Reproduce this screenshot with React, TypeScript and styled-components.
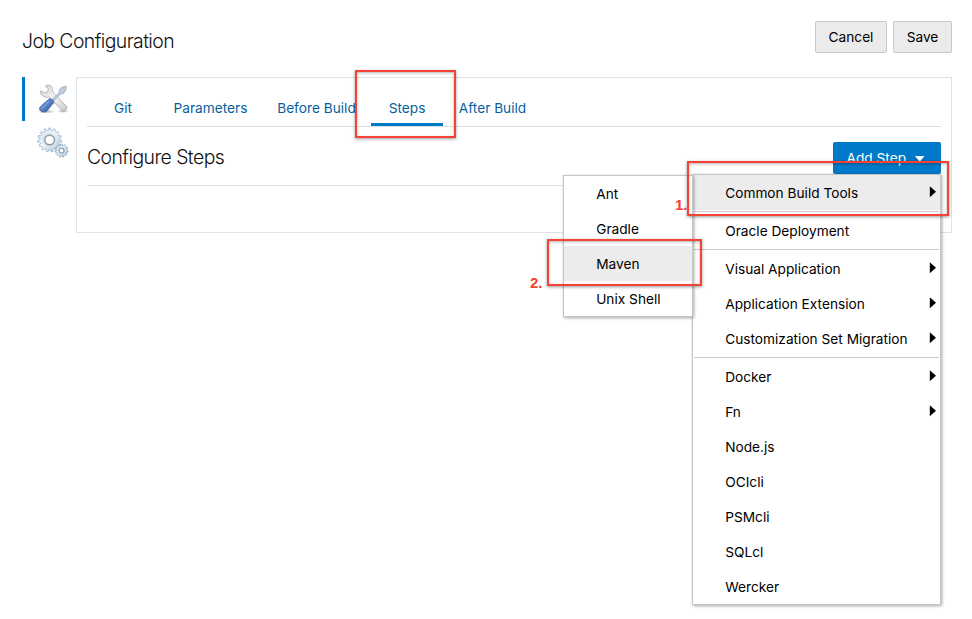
import React from "react";
import styled, { createGlobalStyle, css } from "styled-components";

const GlobalStyle = createGlobalStyle`
  * { box-sizing: border-box; }
  body {
    margin: 0;
    background: #fff;
    color: #000;
    font-family: Inter, "Liberation Sans", sans-serif;
    font-size: 13.7px;
  }
`;

const Page = styled.main`
  position: relative;
  width: 972px;
  height: 619px;
  padding: 21px 20px 0 22px;
  overflow: hidden;
`;

const Header = styled.header`
  display: flex;
  justify-content: space-between;
  height: 56px;
`;

const Title = styled.h1`
  margin: 0;
  padding-top: 8px;
  font-size: 19.4px;
  font-weight: 300;
  line-height: 24px;
  letter-spacing: -0.57px;
  color: #111;
`;

const Actions = styled.div`
  display: flex;
  gap: 6px;
`;

const Button = styled.button<{ $width: number }>`
  width: ${(p) => p.$width}px;
  height: 32px;
  padding: 0 0 1px;
  border: 1px solid #c8c8c8;
  border-radius: 2px;
  background: #ebebeb;
  color: #000;
  font: inherit;
`;

const Body = styled.div`
  display: flex;
`;

const Sidebar = styled.nav`
  width: 54px;
`;

const SideItem = styled.div<{ $active?: boolean }>`
  display: flex;
  height: 44px;
  padding-left: 12px;
  align-items: center;
  border-left: 3px solid ${(p) => (p.$active ? "#0079c8" : "transparent")};
  svg { display: block; }
`;

const Panel = styled.section`
  width: 876px;
  height: 156px;
  padding: 0 10px;
  border: 1px solid #dfe3e6;
`;

const Tabs = styled.div`
  display: flex;
  height: 49px;
  border-bottom: 1px solid #d6dfe6;
`;

const Tab = styled.div<{ $width: number; $active?: boolean }>`
  display: flex;
  width: ${(p) => p.$width}px;
  padding-top: 14px;
  align-items: center;
  justify-content: center;
  border-bottom: 3px solid ${(p) => (p.$active ? "#0079c8" : "transparent")};
  color: #055f9e;
  white-space: nowrap;
`;

const SectionHead = styled.div`
  display: flex;
  height: 59px;
  justify-content: space-between;
  padding-top: 15px;
  border-bottom: 1px solid #e0e2e4;
`;

const SectionTitle = styled.h2`
  margin: 0;
  padding-top: 3px;
  font-size: 19.4px;
  font-weight: 300;
  line-height: 24px;
  letter-spacing: -0.55px;
  color: #111;
`;

const AddStep = styled.button`
  display: flex;
  flex: none;
  width: 108px;
  height: 32px;
  padding: 0 0 0 13.5px;
  align-items: center;
  gap: 8.5px;
  border: 0;
  border-radius: 2px;
  background: #0079c8;
  color: #fff;
  font: inherit;
  line-height: 16px;
  svg { margin-top: 2px; }
`;

const Menu = styled.ul<{ $level: "root" | "sub" }>`
  position: absolute;
  margin: 0;
  padding: 0;
  list-style: none;
  border: 1px solid #c6c6c6;
  background: #fff;
  box-shadow: 1px 1px 3px rgba(0, 0, 0, 0.35);
  ${(p) =>
    p.$level === "root"
      ? css`left: 692px; top: 174px; width: 249px;`
      : css`left: 563px; top: 175px; width: 130px;`}
`;

const MenuItem = styled.li<{ $active?: boolean }>`
  display: flex;
  height: 35px;
  padding: 1px 4px 0 32.2px;
  align-items: center;
  justify-content: space-between;
  background: ${(p) => (p.$active ? "#ececec" : "transparent")};
  line-height: 16px;
  white-space: nowrap;
  svg { margin-bottom: 2px; }
`;

const Separator = styled.li`
  height: 1px;
  margin: 1px;
  background: #c8c8c8;
`;

const Callout = styled.div<{ $x: number; $y: number; $w: number; $h: number }>`
  position: absolute;
  left: ${(p) => p.$x}px;
  top: ${(p) => p.$y}px;
  width: ${(p) => p.$w}px;
  height: ${(p) => p.$h}px;
  border: 2px solid #f64336;
  box-shadow: 0 1px 3px rgba(0, 0, 0, 0.4), inset 0 1px 3px rgba(0, 0, 0, 0.3);
`;

const CalloutLabel = styled.span<{ $x: number; $y: number }>`
  position: absolute;
  left: ${(p) => p.$x}px;
  top: ${(p) => p.$y}px;
  color: #f64336;
  font: bold 15px/16px "Liberation Sans", sans-serif;
  text-shadow: 1px 1px 0 #fff, 0 1px 0 #fff, 1px 0 0 #fff;
`;

const ToolsIcon = () => (
  <svg width="32" height="32" viewBox="0 0 32 32">
    <defs>
      <linearGradient id="steel" x1="0" y1="0" x2="1" y2="1">
        <stop offset="0" stopColor="#d2d2d2" />
        <stop offset=".5" stopColor="#f4f4f4" />
        <stop offset="1" stopColor="#c9c9c9" />
      </linearGradient>
      <linearGradient id="handle" x1="0" y1="0" x2="1" y2="1">
        <stop offset="0" stopColor="#8db4ea" />
        <stop offset="1" stopColor="#254c9b" />
      </linearGradient>
      <radialGradient id="ground">
        <stop offset="0" stopColor="#777" stopOpacity=".6" />
        <stop offset="1" stopColor="#777" stopOpacity="0" />
      </radialGradient>
    </defs>
    <ellipse cx="9" cy="28.5" rx="9" ry="2.2" fill="url(#ground)" />
    <ellipse cx="26" cy="28" rx="6" ry="2" fill="url(#ground)" />
    <path
      d="M9.2 2.5 C13 1 16.500 4.200 15.600 8.400 L17.500 11 L29.200 23 C30.400 24.500 29.300 27.500 27.200 27.800 C25.500 28 24.800 27.200 24 26.300 L12 14.200 C8 15 3.500 12.700 3.300 8.500 L4.300 7.600 L7.200 9.900 L10.800 8.800 L11.300 5.500 L8.600 3.700 Z"
      fill="url(#steel)" stroke="#aaa" strokeWidth=".8" strokeLinejoin="round"
    />
    <path
      d="M15.500 16 L22.300 9.500 C21.700 7 23 4.300 28.600 3.200 L29.300 4 C29 8 27.500 10.800 23.800 10.800 L17 17.600 Z"
      fill="#bccde0" stroke="#93a4b8" strokeWidth=".8" strokeLinejoin="round"
    />
    <path
      d="M12.300 16 C14 15 17.800 18.200 16.600 20 C14 22 12.500 26 9 28.600 C6.500 30 2 28 2.600 25 C4 22.400 9.300 18.600 12.300 16 Z"
      fill="url(#handle)" stroke="#3c5e9e" strokeWidth=".8"
    />
    <path d="M12 18.500 L5 25.500" stroke="#8fb2ea" strokeWidth="1" />
  </svg>
);

const gearPath = (cx: number, cy: number, outer: number, inner: number, teeth: number) => {
  const pts: string[] = [];
  const step = (Math.PI * 2) / teeth;
  for (let i = 0; i < teeth; i++) {
    [
      [-0.28, inner],
      [-0.2, outer],
      [0.2, outer],
      [0.28, inner],
    ].forEach(([k, r]) => {
      const a = (i + k) * step - Math.PI / 2;
      pts.push(`${(cx + Math.cos(a) * r).toFixed(2)} ${(cy + Math.sin(a) * r).toFixed(2)}`);
    });
  }
  return `M${pts.join("L")}Z`;
};

const GearsIcon = () => (
  <svg width="32" height="32" viewBox="0 0 32 32">
    <defs>
      <linearGradient id="gear" x1="0" y1="0" x2="1" y2="1">
        <stop offset="0" stopColor="#c9dbea" />
        <stop offset=".45" stopColor="#f5f9fc" />
        <stop offset="1" stopColor="#a9c2d9" />
      </linearGradient>
    </defs>
    <path d={gearPath(12.6, 13, 12, 9.8, 15)} fill="url(#gear)" stroke="#94aec8" strokeWidth=".7" />
    <circle cx="12.600" cy="13" r="6.600" fill="none" stroke="#d3e1ed" strokeWidth="1.400" />
    <circle cx="12.600" cy="13" r="4.800" fill="#fff" stroke="#8b98a6" strokeWidth="1.400" />
    <path d={gearPath(24.6, 23.6, 6.6, 5, 11)} fill="url(#gear)" stroke="#839fba" strokeWidth=".7" />
    <circle cx="24.600" cy="23.600" r="2.500" fill="#fff" stroke="#879db3" strokeWidth="1.200" />
  </svg>
);

const SubmenuArrow = () => (
  <svg width="7" height="12" viewBox="0 0 7 12">
    <path d="M.8 0.300 L7 5.800 L.8 11.300 Z" fill="#000" />
  </svg>
);

const tabs = [
  { label: "Git", width: 72 },
  { label: "Parameters", width: 103 },
  { label: "Before Build", width: 109 },
  { label: "Steps", width: 72, active: true },
  { label: "After Build", width: 99 },
];

const stepGroups = [
  [{ label: "Common Build Tools", sub: true, active: true }],
  [{ label: "Oracle Deployment" }],
  [
    { label: "Visual Application", sub: true },
    { label: "Application Extension", sub: true },
    { label: "Customization Set Migration", sub: true },
  ],
  [
    { label: "Docker", sub: true },
    { label: "Fn", sub: true },
    { label: "Node.js" },
    { label: "OCIcli" },
    { label: "PSMcli" },
    { label: "SQLcl" },
    { label: "Wercker" },
  ],
] as { label: string; sub?: boolean; active?: boolean }[][];

const buildTools = ["Ant", "Gradle", "Maven", "Unix Shell"];

export default function App() {
  return (
    <Page>
      <GlobalStyle />
      <Header>
        <Title>Job Configuration</Title>
        <Actions>
          <Button $width={72}>Cancel</Button>
          <Button $width={59}>Save</Button>
        </Actions>
      </Header>
      <Body>
        <Sidebar>
          <SideItem $active><ToolsIcon /></SideItem>
          <SideItem><GearsIcon /></SideItem>
        </Sidebar>
        <Panel>
          <Tabs>
            {tabs.map((t) => (
              <Tab key={t.label} $width={t.width} $active={t.active}>{t.label}</Tab>
            ))}
          </Tabs>
          <SectionHead>
            <SectionTitle>Configure Steps</SectionTitle>
            <AddStep>
              Add Step
              <svg width="10" height="6" viewBox="0 0 10 6"><path d="M0 0h9.500L4.750 5.800Z" fill="#fff" /></svg>
            </AddStep>
          </SectionHead>
        </Panel>
      </Body>
      <Menu $level="root">
        {stepGroups.map((group, i) => (
          <React.Fragment key={i}>
            {i > 0 && <Separator />}
            {group.map((item) => (
              <MenuItem key={item.label} $active={item.active}>
                {item.label}
                {item.sub && <SubmenuArrow />}
              </MenuItem>
            ))}
          </React.Fragment>
        ))}
      </Menu>
      <Menu $level="sub">
        {buildTools.map((label) => (
          <MenuItem key={label} $active={label === "Maven"}>{label}</MenuItem>
        ))}
      </Menu>
      <CalloutLabel $x={675} $y={197}>1.</CalloutLabel>
      <CalloutLabel $x={530} $y={275}>2.</CalloutLabel>
      <Callout $x={355} $y={70} $w={101} $h={68} />
      <Callout $x={687} $y={161} $w={262} $h={55} />
      <Callout $x={547} $y={239} $w={155} $h={47} />
    </Page>
  );
}
